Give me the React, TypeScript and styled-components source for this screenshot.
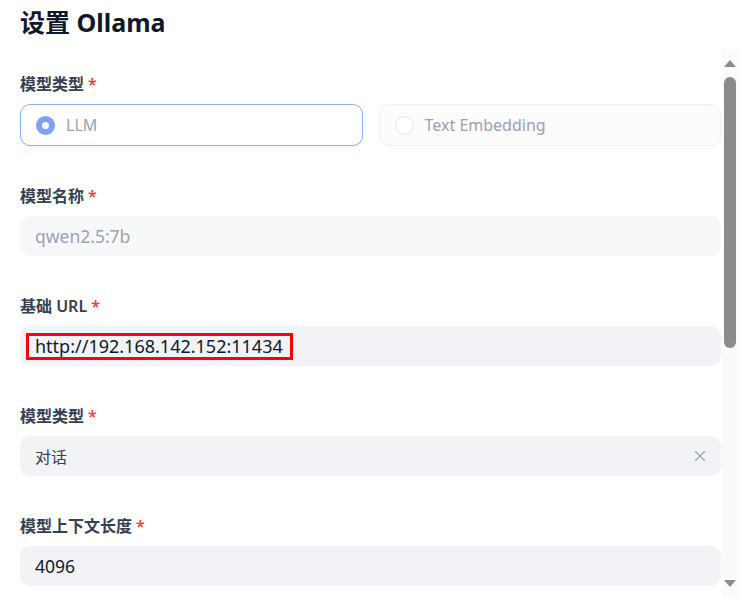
import React from "react";
import styled, { createGlobalStyle } from "styled-components";

const GlobalStyle = createGlobalStyle`
  html, body {
    margin: 0;
    padding: 0;
    background: #ffffff;
  }
  body {
    font-family: "Noto Sans", "Noto Sans CJK SC", sans-serif;
    color: #101828;
  }
  * { box-sizing: border-box; }
`;

const Page = styled.div`
  width: 749px;
  height: 602px;
  display: flex;
  flex-direction: column;
  overflow: hidden;
`;

const Header = styled.div`
  height: 49px;
  padding: 4px 20px 0;
  flex-shrink: 0;
`;

const Title = styled.h1`
  margin: 0;
  font-size: 25px;
  line-height: 36px;
  font-weight: 700;
  color: #101828;
`;

const Body = styled.div`
  width: 739px;
  height: 548px;
  display: flex;
  flex-shrink: 0;
`;

const ScrollContent = styled.div`
  flex: 1;
  min-width: 0;
  overflow: hidden;
`;

const Scrollbar = styled.div`
  width: 17px;
  flex-shrink: 0;
  display: flex;
  flex-direction: column;
  background: #fafafa;
`;

const ScrollButton = styled.div`
  height: 28px;
  display: flex;
  align-items: center;
  justify-content: center;
  padding-right: 1px;
`;

const Thumb = styled.div`
  height: 271px;
  margin: 0 3px 0 2px;
  border-radius: 6px;
  background: #8b8b8b;
`;

const ScrollSpacer = styled.div`
  flex: 1;
`;

const Form = styled.div`
  display: flex;
  flex-direction: column;
  gap: 42px;
  padding: 27px 1px 0 20px;
`;

const Field = styled.div`
  display: flex;
  flex-direction: column;
  gap: 8px;
`;

const Label = styled.div`
  height: 20px;
  line-height: 17px;
  font-size: 16px;
  font-weight: 600;
  color: #354052;
  white-space: nowrap;
`;

const Required = styled.span`
  color: #f04438;
  margin-left: 4px;
`;

const RadioGroup = styled.div`
  display: grid;
  grid-template-columns: 1fr 1fr;
  gap: 16px;
`;

const RadioCard = styled.div<{ $checked?: boolean }>`
  height: 42px;
  display: flex;
  align-items: center;
  gap: 11px;
  padding-left: 15px;
  border-radius: 10px;
  border: 1px solid ${(p) => (p.$checked ? "#8eb0f8" : "#eef0f3")};
  background: ${(p) => (p.$checked ? "#ffffff" : "#fcfcfd")};
  box-shadow: ${(p) => (p.$checked ? "0 1px 2px rgba(16, 24, 40, 0.08)" : "none")};
  font-size: 16px;
  color: #98a2b3;
`;

const RadioDot = styled.span<{ $checked?: boolean }>`
  width: 19px;
  height: 19px;
  border-radius: 50%;
  flex-shrink: 0;
  ${(p) =>
    p.$checked
      ? `border: 6px solid #7ea3f6; background: #ffffff;`
      : `border: 1.5px solid #e4e7ec; background: #ffffff;`}
`;

const InputBox = styled.div<{ $muted?: boolean; $size?: number }>`
  height: 40px;
  display: flex;
  align-items: center;
  padding: 0 15px;
  border-radius: 10px;
  background: ${(p) => (p.$muted ? "#f7f8fa" : "#f2f3f6")};
  font-size: ${(p) => p.$size ?? 17.5}px;
  color: ${(p) => (p.$muted ? "#98a2b3" : "#101828")};
  white-space: nowrap;
`;

const SelectText = styled.span`
  flex: 1;
  font-size: 16px;
  color: #354052;
`;

const ClearIcon = styled.svg`
  width: 12px;
  height: 12px;
  flex-shrink: 0;
`;

const Highlight = styled.span`
  display: inline-flex;
  align-items: center;
  height: 27px;
  margin-left: -9px;
  padding: 0 7px 0 6px;
  border: 3px solid #ff0000;
`;

export default function App() {
  return (
    <>
      <GlobalStyle />
      <Page>
        <Header>
          <Title>设置 Ollama</Title>
        </Header>
        <Body>
          <ScrollContent>
            <Form>
              <Field>
                <Label>
                  模型类型<Required>*</Required>
                </Label>
                <RadioGroup>
                  <RadioCard $checked>
                    <RadioDot $checked />
                    LLM
                  </RadioCard>
                  <RadioCard>
                    <RadioDot />
                    Text Embedding
                  </RadioCard>
                </RadioGroup>
              </Field>
              <Field>
                <Label>
                  模型名称<Required>*</Required>
                </Label>
                <InputBox $muted>qwen2.5:7b</InputBox>
              </Field>
              <Field>
                <Label>
                  基础 URL<Required>*</Required>
                </Label>
                <InputBox $size={18}>
                  <Highlight>http://192.168.142.152:11434</Highlight>
                </InputBox>
              </Field>
              <Field>
                <Label>
                  模型类型<Required>*</Required>
                </Label>
                <InputBox>
                  <SelectText>对话</SelectText>
                  <ClearIcon viewBox="0 0 12 12">
                    <path
                      d="M1.5 1.5 L10.5 10.5 M10.5 1.5 L1.5 10.5"
                      stroke="#a0a6b2"
                      strokeWidth="1.4"
                      strokeLinecap="round"
                      fill="none"
                    />
                  </ClearIcon>
                </InputBox>
              </Field>
              <Field>
                <Label>
                  模型上下文长度<Required>*</Required>
                </Label>
                <InputBox>4096</InputBox>
              </Field>
            </Form>
          </ScrollContent>
          <Scrollbar>
            <ScrollButton>
              <svg width="12" height="7" viewBox="0 0 12 7">
                <path d="M0 7 L6 0 L12 7 Z" fill="#8b8b8b" />
              </svg>
            </ScrollButton>
            <Thumb />
            <ScrollSpacer />
            <ScrollButton>
              <svg width="12" height="7" viewBox="0 0 12 7">
                <path d="M0 0 L12 0 L6 7 Z" fill="#8b8b8b" />
              </svg>
            </ScrollButton>
          </Scrollbar>
        </Body>
      </Page>
    </>
  );
}
